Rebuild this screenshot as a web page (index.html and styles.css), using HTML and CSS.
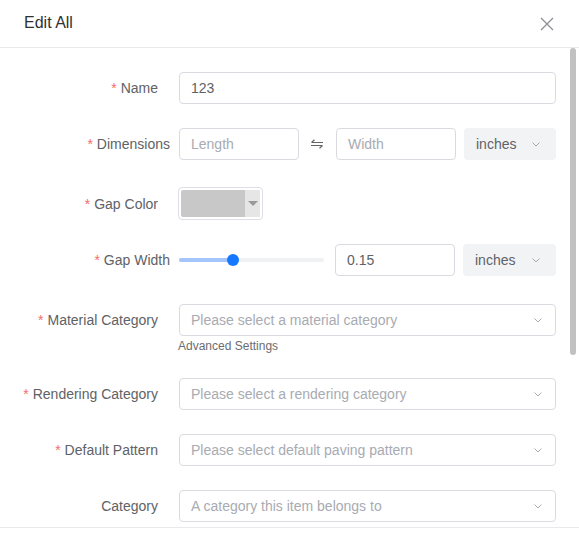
FILE: index.html
```html
<!DOCTYPE html>
<html lang="en">
<head>
<meta charset="utf-8">
<title>Edit All</title>
<link rel="stylesheet" href="styles.css">
</head>
<body>
<div class="dialog">
  <div class="dlg-header">
    <span class="title">Edit All</span>
    <span class="close">
      <svg width="14" height="14" viewBox="0 0 14 14"><path d="M1 1L13 13M13 1L1 13" stroke="#8c8f94" stroke-width="1.3" fill="none"/></svg>
    </span>
  </div>
  <div class="dlg-body">
    <div class="form">
      <div class="row">
        <div class="lbl req">Name</div>
        <div class="ctl"><div class="field grow"><span class="val">123</span></div></div>
      </div>
      <div class="row">
        <div class="lbl req tight">Dimensions</div>
        <div class="ctl">
          <div class="field w120"><span class="ph">Length</span></div>
          <span class="swap">
            <svg width="14" height="12" viewBox="0 0 14 12"><path d="M1.5 4.5H13M1.5 4.5L4.5 1.8M1 7.5H12.5M12.5 7.5L9.5 10.2" stroke="#606266" stroke-width="1.2" fill="none"/></svg>
          </span>
          <div class="field w120"><span class="ph">Width</span></div>
          <div class="unit"><span>inches</span>
            <svg class="chev" width="8" height="5" viewBox="0 0 8 5"><path d="M0.5 0.5L4 4L7.5 0.5" stroke="#a8abb2" stroke-width="1" fill="none"/></svg>
          </div>
        </div>
      </div>
      <div class="row row-color">
        <div class="lbl req">Gap Color</div>
        <div class="ctl top">
          <div class="picker">
            <span class="swatch"></span>
            <span class="drop"><span class="tri"></span></span>
          </div>
        </div>
      </div>
      <div class="row row-slider">
        <div class="lbl req tight">Gap Width</div>
        <div class="ctl">
          <div class="slider">
            <div class="rail"></div>
            <div class="track" style="width: 54px;"></div>
            <div class="handle" style="left: 54px;"></div>
          </div>
          <div class="field w120"><span class="val">0.15</span></div>
          <div class="unit"><span>inches</span>
            <svg class="chev" width="8" height="5" viewBox="0 0 8 5"><path d="M0.5 0.5L4 4L7.5 0.5" stroke="#a8abb2" stroke-width="1" fill="none"/></svg>
          </div>
        </div>
      </div>
      <div class="row">
        <div class="lbl req">Material Category</div>
        <div class="ctl col">
          <div class="field select"><span class="ph">Please select a material category</span>
            <svg class="chev" width="8" height="5" viewBox="0 0 8 5"><path d="M0.5 0.5L4 4L7.5 0.5" stroke="#a8abb2" stroke-width="1" fill="none"/></svg>
          </div>
          <div class="adv">Advanced Settings</div>
        </div>
      </div>
      <div class="row">
        <div class="lbl req">Rendering Category</div>
        <div class="ctl">
          <div class="field grow select"><span class="ph">Please select a rendering category</span>
            <svg class="chev" width="8" height="5" viewBox="0 0 8 5"><path d="M0.5 0.5L4 4L7.5 0.5" stroke="#a8abb2" stroke-width="1" fill="none"/></svg>
          </div>
        </div>
      </div>
      <div class="row">
        <div class="lbl req">Default Pattern</div>
        <div class="ctl">
          <div class="field grow select"><span class="ph">Please select default paving pattern</span>
            <svg class="chev" width="8" height="5" viewBox="0 0 8 5"><path d="M0.5 0.5L4 4L7.5 0.5" stroke="#a8abb2" stroke-width="1" fill="none"/></svg>
          </div>
        </div>
      </div>
      <div class="row">
        <div class="lbl">Category</div>
        <div class="ctl">
          <div class="field grow select"><span class="ph">A category this item belongs to</span>
            <svg class="chev" width="8" height="5" viewBox="0 0 8 5"><path d="M0.5 0.5L4 4L7.5 0.5" stroke="#a8abb2" stroke-width="1" fill="none"/></svg>
          </div>
        </div>
      </div>
    </div>
    <div class="thumb"></div>
  </div>
  <div class="dlg-footer"></div>
</div>
</body>
</html>
```
FILE: styles.css
```css
html, body {
  margin: 0;
  padding: 0;
  background: #ffffff;
}
body {
  font-family: "Liberation Sans", Arial, sans-serif;
  font-size: 14px;
  color: #606266;
}
.dialog {
  width: 579px;
  height: 539px;
  display: flex;
  flex-direction: column;
  background: #fff;
}
.dlg-header {
  height: 47px;
  border-bottom: 1px solid #e9e9eb;
  display: flex;
  align-items: center;
  justify-content: space-between;
  padding: 0 25px 0 24px;
  flex-shrink: 0;
}
.title {
  font-size: 16px;
  color: #303133;
  margin-top: -1px;
}
.close {
  display: flex;
  width: 14px;
  height: 14px;
}
.dlg-body {
  position: relative;
  height: 479px;
  overflow: hidden;
  flex-shrink: 0;
}
.form {
  padding: 24px 23px 0 0;
}
.row {
  display: flex;
  margin-bottom: 24px;
}
.lbl {
  width: 179px;
  box-sizing: border-box;
  padding-right: 21px;
  text-align: right;
  line-height: 32px;
  flex-shrink: 0;
  color: #606266;
  white-space: nowrap;
}
.lbl.tight {
  padding-right: 9px;
}
.lbl.req::before {
  content: "*";
  color: #f56c6c;
  margin-right: 4px;
}
.ctl {
  flex: 1;
  display: flex;
  align-items: center;
  min-width: 0;
}
.ctl.top {
  align-items: flex-start;
}
.ctl.col {
  flex-direction: column;
  align-items: stretch;
}
.field {
  height: 32px;
  box-sizing: border-box;
  border: 1px solid #d9dbe0;
  border-radius: 4px;
  display: flex;
  align-items: center;
  padding: 0 11px;
  background: #fff;
  flex-shrink: 0;
}
.field.grow {
  flex: 1;
}
.field.w120 {
  width: 120px;
}
.field.select {
  justify-content: space-between;
  padding-right: 13px;
}
.val {
  color: #606266;
}
.ph {
  color: #a8abb2;
}
.swap {
  width: 38px;
  display: flex;
  justify-content: center;
  align-items: center;
  flex-shrink: 0;
  margin-left: -1px;
}
.unit {
  flex: 1;
  margin-left: 8px;
  height: 32px;
  border-radius: 4px;
  background: #f2f3f5;
  display: flex;
  align-items: center;
  justify-content: space-between;
  padding: 0 16px 0 12px;
  color: #606266;
}
.chev {
  display: block;
}
.row-color {
  margin-bottom: 20px;
}
.row-color .lbl {
  line-height: 40px;
}
.picker {
  margin-top: 3px;
  margin-left: -1px;
  width: 85px;
  height: 33px;
  box-sizing: border-box;
  border: 1px solid #dcdfe6;
  border-radius: 4px;
  padding: 2px;
  display: flex;
}
.swatch {
  flex: 1;
  background: #c8c8c8;
  border-radius: 2px 0 0 2px;
}
.drop {
  width: 15px;
  background: #e6e6e6;
  display: flex;
  align-items: center;
  justify-content: center;
}
.tri {
  width: 0;
  height: 0;
  border-left: 5px solid transparent;
  border-right: 5px solid transparent;
  border-top: 5px solid #999;
}
.row-slider {
  margin-bottom: 28px;
}
.slider {
  position: relative;
  width: 145px;
  height: 32px;
  margin-right: 11px;
  flex-shrink: 0;
}
.rail {
  position: absolute;
  left: 0;
  right: 0;
  top: 14px;
  height: 4px;
  border-radius: 2px;
  background: #f0f1f2;
}
.track {
  position: absolute;
  left: 0;
  top: 14px;
  height: 4px;
  border-radius: 2px;
  background: #a3c5f9;
}
.handle {
  position: absolute;
  top: 10px;
  width: 12px;
  height: 12px;
  margin-left: -6px;
  border-radius: 50%;
  background: #1677ff;
}
.adv {
  font-size: 12px;
  line-height: 16px;
  margin-top: 2px;
  margin-left: -1px;
  color: #6b6d71;
}
.thumb {
  position: absolute;
  left: 570px;
  top: 0;
  width: 6px;
  height: 307px;
  border-radius: 3px;
  background: #c1c1c1;
}
.dlg-footer {
  flex: 1;
  border-top: 1px solid #e9e9eb;
}
```
